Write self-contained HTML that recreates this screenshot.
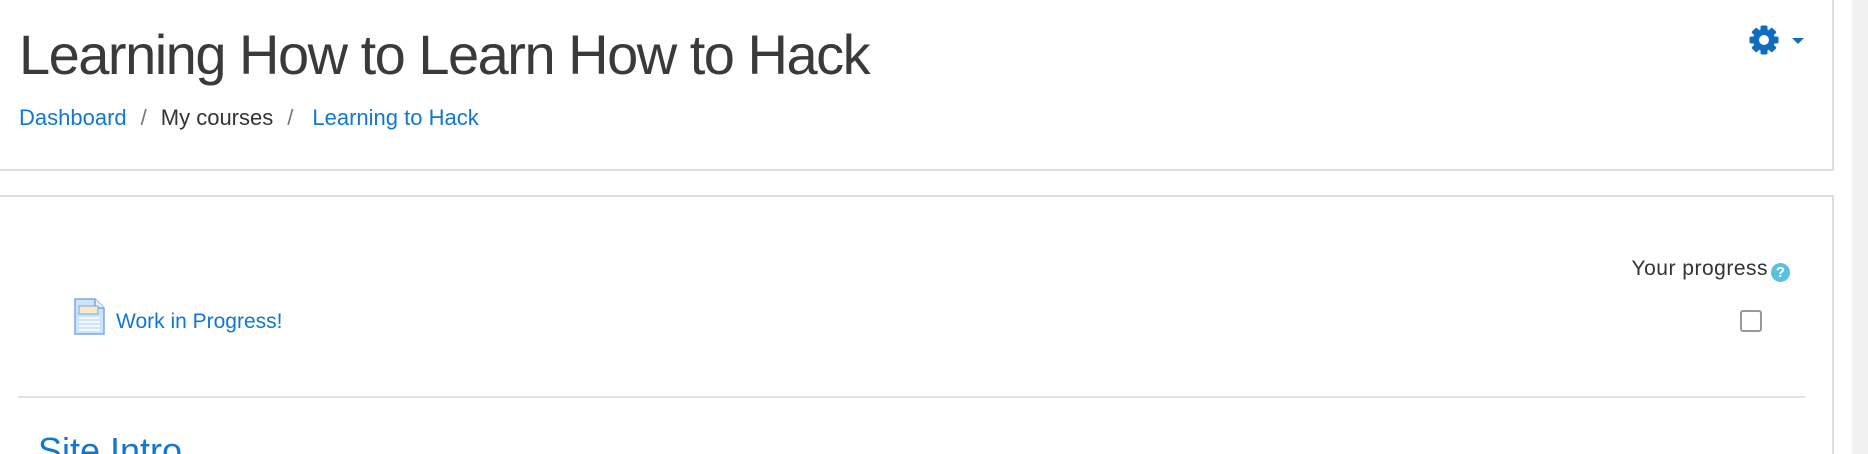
<!DOCTYPE html>
<html><head><style>
html,body{margin:0;width:1868px;height:454px;overflow:hidden}
body{background:#fff;font-family:"Liberation Sans",sans-serif;position:relative}
.abs{position:absolute}
.card{position:absolute;left:-2px;width:1836px;border:2px solid #dedede;background:#fff;box-sizing:border-box}
a{color:#1177d1;text-decoration:none}
</style></head><body>
<div class="abs" style="left:1852px;top:0;width:16px;height:454px;background:#f1f1f1"></div>
<div class="card" style="top:-2px;height:173px"></div>
<div class="card" style="top:195px;height:259px;border-bottom:none"></div>
<div class="abs" style="left:19px;top:20px;font-size:56px;font-weight:300;color:#3a3a3a;letter-spacing:-1.5px;white-space:nowrap;line-height:70px">Learning How to Learn How to Hack</div>
<div class="abs" style="left:19px;top:105px;font-size:22px;color:#333;white-space:nowrap;line-height:26px"><a>Dashboard</a><span style="color:#777;margin:0 14px">/</span>My courses<span style="color:#777;margin:0 19px 0 14px">/</span><a>Learning to Hack</a></div>
<svg class="abs" style="left:1748px;top:24px" width="32" height="32" viewBox="0 0 32 32"><g fill="#0f6cbf"><circle cx="16" cy="16" r="11"/><g id="t"><rect x="12.5" y="1.5" width="7" height="7" rx="1.5"/><rect x="12.5" y="23.5" width="7" height="7" rx="1.5"/></g><use href="#t" transform="rotate(45 16 16)"/><use href="#t" transform="rotate(90 16 16)"/><use href="#t" transform="rotate(135 16 16)"/></g><circle cx="16" cy="16" r="5" fill="#fff"/></svg>
<div class="abs" style="left:1792px;top:38px;width:0;height:0;border-left:6px solid transparent;border-right:6px solid transparent;border-top:6px solid #0f6cbf"></div>
<div class="abs" style="right:100px;top:256px;font-size:21px;letter-spacing:0.5px;color:#333;white-space:nowrap;line-height:26px">Your progress</div>
<div class="abs" style="left:1771px;top:263px;width:19px;height:19px;border-radius:50%;background:#5bc0de;color:#fff;font-size:15px;font-weight:bold;text-align:center;line-height:19px">?</div>
<div class="abs" style="left:1740px;top:310px;width:18px;height:18px;border:2.5px solid #999;border-radius:3px"></div>
<svg class="abs" style="left:74px;top:298px" width="31" height="37" viewBox="0 0 31 37"><path d="M1 1H21L30 10V36H1Z" fill="#cfe3fb" stroke="#7aa8e8" stroke-width="1.5"/><path d="M21 1V10H30" fill="#e8f1fc" stroke="#7aa8e8" stroke-width="1.5"/><rect x="5" y="8" width="19" height="8" fill="#fbe8c4" stroke="#7aa8e8"/><g stroke="#fff" stroke-width="1.5"><line x1="5" y1="20" x2="26" y2="20"/><line x1="5" y1="24" x2="26" y2="24"/><line x1="5" y1="28" x2="26" y2="28"/><line x1="5" y1="32" x2="26" y2="32"/></g></svg>
<div class="abs" style="left:116px;top:309px;font-size:21px;line-height:26px;white-space:nowrap"><a>Work in Progress!</a></div>
<div class="abs" style="left:18px;top:396px;width:1787px;height:2px;background:#dfe3e8"></div>
<div class="abs" style="left:38px;top:428px;height:26px;overflow:hidden;font-size:36px;font-weight:300;color:#1177d1;white-space:nowrap;line-height:46px">Site Intro</div>
</body></html>
